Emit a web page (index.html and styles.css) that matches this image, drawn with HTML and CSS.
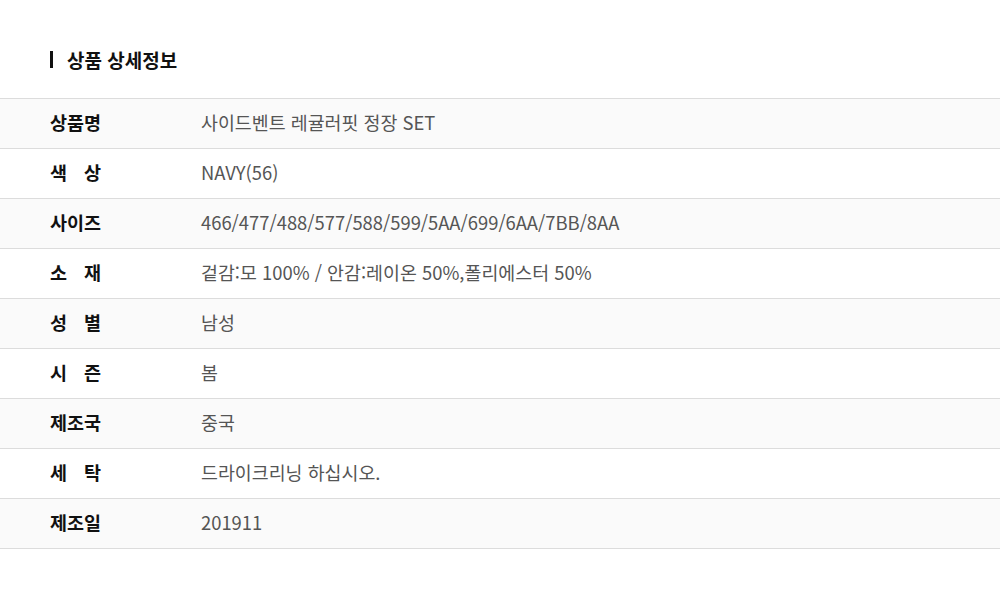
FILE: index.html
```html
<!DOCTYPE html>
<html lang="ko">

<head>
    <meta charset="UTF-8">
    <meta name="viewport" content="width=device-width, initial-scale=1.0">
    <title>상품 상세정보</title>
    <link rel="stylesheet" href="styles.css">
</head>

<body>
    <section class="detail">
        <h2 class="detail-title">상품 상세정보</h2>

        <table class="info-table">
            <tr>
                <th><span class="spread">상품명</span></th>
                <td>사이드벤트 레귤러핏 정장 SET</td>
            </tr>
            <tr>
                <th><span class="spread">색 상</span></th>
                <td>NAVY(56)</td>
            </tr>
            <tr>
                <th><span class="spread">사이즈</span></th>
                <td>466/477/488/577/588/599/5AA/699/6AA/7BB/8AA</td>
            </tr>
            <tr>
                <th><span class="spread">소 재</span></th>
                <td>겉감:모 100% / 안감:레이온 50%,폴리에스터 50%</td>
            </tr>
            <tr>
                <th><span class="spread">성 별</span></th>
                <td>남성</td>
            </tr>
            <tr>
                <th><span class="spread">시 즌</span></th>
                <td>봄</td>
            </tr>
            <tr>
                <th><span class="spread">제조국</span></th>
                <td>중국</td>
            </tr>
            <tr>
                <th><span class="spread">세 탁</span></th>
                <td>드라이크리닝 하십시오.</td>
            </tr>
            <tr>
                <th><span class="spread">제조일</span></th>
                <td>201911</td>
            </tr>
        </table>
    </section>
</body>

</html>
```

FILE: styles.css
```css
body {
    font-family: "Noto Sans CJK KR", "Noto Sans", sans-serif;
    background-color: #ffffff;
    margin: 0;
    padding: 0;
    color: #111111;
}

.detail {
    padding-top: 51px;
}

.detail-title {
    margin: 0 0 30px 50px;
    padding-left: 14px;
    border-left: 3px solid #111111;
    font-size: 19px;
    font-weight: 700;
    line-height: 17px;
    height: 17px;
}

.info-table {
    width: 100%;
    border-collapse: collapse;
    border-top: 1px solid #dcdcdc;
}

.info-table tr {
    border-bottom: 1px solid #dcdcdc;
}

.info-table tr:nth-child(odd) {
    background-color: #fafafa;
}

.info-table th {
    width: 151px;
    height: 45px;
    padding: 0 0 4px 50px;
    text-align: left;
    font-size: 18.5px;
    font-weight: 700;
    line-height: 20px;
    color: #111111;
    white-space: nowrap;
}

.spread {
    display: inline-block;
    width: 51px;
    white-space: nowrap;
    text-align: justify;
    text-align-last: justify;
}

.info-table td {
    padding: 0 0 4px 0;
    font-size: 18.4px;
    line-height: 20px;
    color: #555555;
}
```
